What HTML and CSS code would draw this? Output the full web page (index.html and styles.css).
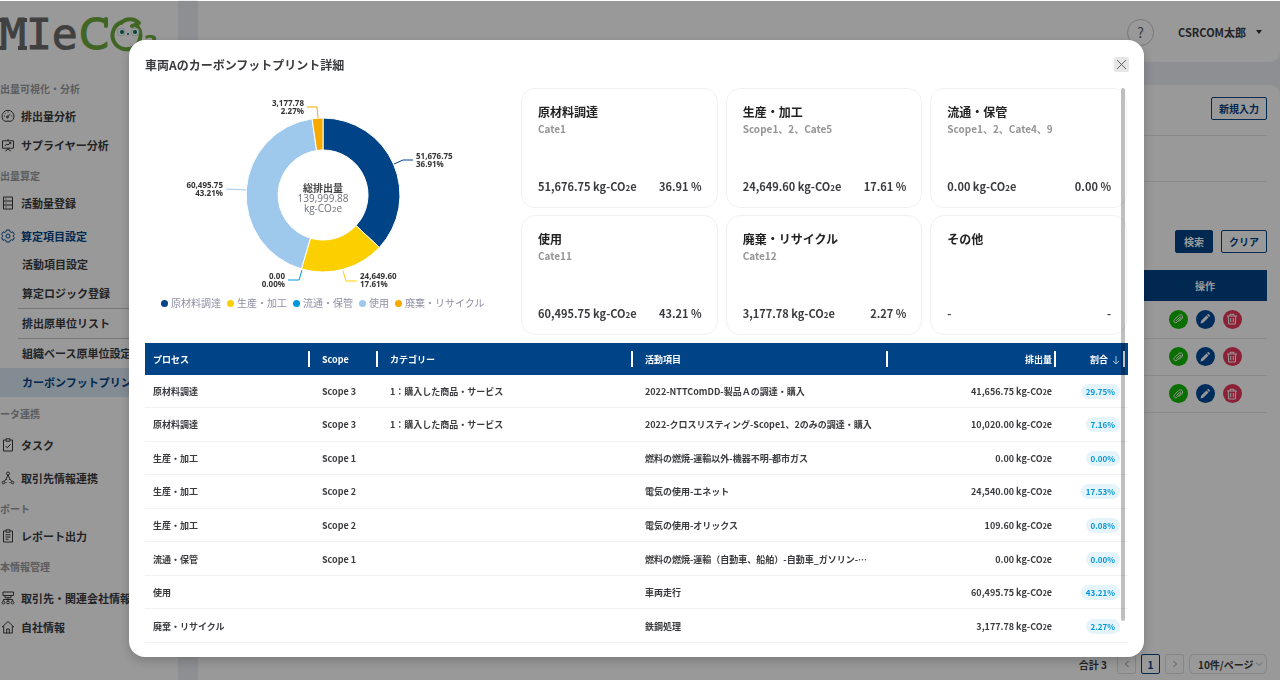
FILE: index.html
```html
<!doctype html>
<html lang="ja">
<head>
    <meta charset="UTF-8">
    <meta name="viewport" content="width=device-width, initial-scale=1">
    <title>MIeCO2</title>
    <link rel="stylesheet" href="styles.css">
</head>
<body>
<svg class="defs" width="0" height="0">
    <symbol id="i-gauge" viewBox="0 0 14 14"><path d="M3.5 12.2A6 6 0 1 1 10.5 12.2ZM6.2 8.2L9.4 5M7 2.6v1M3 7h1M10.2 7h1M4 4.2l.6.6"/><circle cx="6.4" cy="8" r="1"/></symbol>
    <symbol id="i-board" viewBox="0 0 14 14"><path d="M1.5 2.8h11v7.4h-11zM7 1v1.8M7 10.2v1.4M4.2 13L7 11.2 9.800 13M3.800 8l2-2 1.200 1 2.600-2.400M8 4.600h1.800v1.600"/></symbol>
    <symbol id="i-cabinet" viewBox="0 0 14 14"><path d="M2.500 1h9v12h-9zM2.500 5h9M2.500 9h9M4.500 3h1M4.500 7h1M4.500 11h1"/></symbol>
    <symbol id="i-gear" viewBox="0 0 14 14"><path d="M5.500 1h3l.5 1.700 1.200.7 1.700-.5 1.500 2.600-1.200 1.200v.8l1.200 1.200-1.500 2.600-1.700-.5-1.200.7-.5 1.500h-3L5 11.500l-1.200-.7-1.700.5L.6 8.700l1.200-1.200v-.8L.6 5.500l1.500-2.600 1.700.5L5 2.700z"/><circle cx="7" cy="7" r="2"/></symbol>
    <symbol id="i-task" viewBox="0 0 14 14"><path d="M5 2H2.500v11h9V2H9M5 .8h4v2.400H5zM4.500 8l1.800 1.800 3.200-3.600"/></symbol>
    <symbol id="i-link" viewBox="0 0 14 14"><circle cx="7" cy="2.500" r="1.500"/><circle cx="2.500" cy="11.500" r="1.300"/><circle cx="11.500" cy="11.500" r="1.300"/><path d="M7 4L4.800 8.500M7 4l2.200 4.500M3.200 10.300L4.800 8.500h1M10.800 10.300L9.200 8.500h-1M4.500 11.500h1M8.500 11.500h1"/></symbol>
    <symbol id="i-report" viewBox="0 0 14 14"><path d="M5 2H2.500v11h9V2H9M5 .8h4v2.400H5zM4.500 5.800h5M4.500 8h5M4.500 10.200h3"/></symbol>
    <symbol id="i-org" viewBox="0 0 14 14"><path d="M2 1h10.500v3.500H2zM4 4.500v2.200h6V4.500M7 6.700V10M2.500 10V8.500h9V10"/><circle cx="2.500" cy="11.500" r="1.400"/><circle cx="7" cy="11.500" r="1.400"/><circle cx="11.500" cy="11.500" r="1.400"/></symbol>
    <symbol id="i-home" viewBox="0 0 14 14"><path d="M1 7.200L7 1.500l6 5.700M2.700 6v7h8.600V6M5.700 13V9h2.600v4"/></symbol>
    <symbol id="i-clip" viewBox="0 0 12 12"><path d="M4.200 7.800l3.400-3.400c.9-.9 2 .2 1.100 1.100L5 9.200C3.300 10.900.8 8.400 2.500 6.700L6.500 2.700C9 .2 12.200 3.400 9.700 5.900L7 8.600"/></symbol>
    <symbol id="i-pen" viewBox="0 0 12 12"><path class="solid" d="M1.500 10.500l.7-2.700 5.300-5.300 2 2-5.300 5.300zM8.100 1.900l.8-.8c.5-.5 2.500 1.500 2 2l-.8.8z"/></symbol>
    <symbol id="i-trash" viewBox="0 0 12 12"><path d="M1 3h10M4 3V1.300h4V3M2.200 3l.5 8h6.600l.5-8M4.700 5v4.200M7.300 5v4.200"/></symbol>
</svg>

<div class="app">
    <aside class="sidebar">
        <a href="#" class="logo" aria-label="MIeCO2">
            <svg width="172" height="50" viewBox="0 0 172 50">
                <text class="logo-gray" x="3" y="40">MIe</text>
                <path class="logo-foot" d="M0 39h9M21 39h9M0 11h7M23 11h7"/>
                <text class="logo-green" x="82" y="40">C</text>
                <path class="logo-line" d="M109 10v7"/>
                <path class="logo-line" d="M125 13a14 14 0 1 0 14 3M124 14c5-5 13-5 18 0l-7 3"/>
                <circle class="eye-white" cx="124" cy="23" r="4"/>
                <circle class="eye-white" cx="138" cy="23" r="4"/>
                <circle class="eye" cx="125" cy="23" r="2"/>
                <circle class="eye" cx="138" cy="23" r="2"/>
                <circle class="eye" cx="131" cy="25" r="1"/>
                <text class="logo-sub" x="147" y="40">2</text>
            </svg>
        </a>
        <nav>
            <h2 class="section">排出量可視化・分析</h2>
            <a href="#" class="item"><svg class="icon"><use href="#i-gauge"/></svg>排出量分析</a>
            <a href="#" class="item"><svg class="icon"><use href="#i-board"/></svg>サプライヤー分析</a>
            <h2 class="section">排出量算定</h2>
            <a href="#" class="item"><svg class="icon"><use href="#i-cabinet"/></svg>活動量登録</a>
            <a href="#" class="item spaced active"><svg class="icon"><use href="#i-gear"/></svg>算定項目設定</a>
            <a href="#" class="sub">活動項目設定</a>
            <a href="#" class="sub">算定ロジック登録</a>
            <a href="#" class="sub line">排出原単位リスト</a>
            <a href="#" class="sub line">組織ベース原単位設定</a>
            <a href="#" class="sub cur">カーボンフットプリント</a>
            <h2 class="section">データ連携</h2>
            <a href="#" class="item spaced"><svg class="icon"><use href="#i-task"/></svg>タスク</a>
            <a href="#" class="item spaced"><svg class="icon"><use href="#i-link"/></svg>取引先情報連携</a>
            <h2 class="section">レポート</h2>
            <a href="#" class="item"><svg class="icon"><use href="#i-report"/></svg>レポート出力</a>
            <h2 class="section">基本情報管理</h2>
            <a href="#" class="item spaced"><svg class="icon"><use href="#i-org"/></svg>取引先・関連会社情報</a>
            <a href="#" class="item"><svg class="icon"><use href="#i-home"/></svg>自社情報</a>
        </nav>
    </aside>

    <div class="main">
        <header class="header">
            <button class="help">?</button>
            <button class="user">CSRCOM太郎<span class="caret"></span></button>
        </header>
        <main class="panel">
            <div class="bar bar-new"><button class="btn">新規入力</button></div>
            <div class="bar bar-filter"></div>
            <div class="bar-search">
                <button class="btn primary">検索</button>
                <button class="btn">クリア</button>
            </div>
            <table class="list">
                <thead>
                    <tr><th></th><th class="ops">操作</th></tr>
                </thead>
                <tbody>
                    <tr>
                        <td></td>
                        <td><div class="actions">
                            <button class="act green" aria-label="添付"><svg><use href="#i-clip"/></svg></button>
                            <button class="act blue" aria-label="編集"><svg><use href="#i-pen"/></svg></button>
                            <button class="act red" aria-label="削除"><svg><use href="#i-trash"/></svg></button>
                        </div></td>
                    </tr>
                    <tr>
                        <td></td>
                        <td><div class="actions">
                            <button class="act green" aria-label="添付"><svg><use href="#i-clip"/></svg></button>
                            <button class="act blue" aria-label="編集"><svg><use href="#i-pen"/></svg></button>
                            <button class="act red" aria-label="削除"><svg><use href="#i-trash"/></svg></button>
                        </div></td>
                    </tr>
                    <tr>
                        <td></td>
                        <td><div class="actions">
                            <button class="act green" aria-label="添付"><svg><use href="#i-clip"/></svg></button>
                            <button class="act blue" aria-label="編集"><svg><use href="#i-pen"/></svg></button>
                            <button class="act red" aria-label="削除"><svg><use href="#i-trash"/></svg></button>
                        </div></td>
                    </tr>
                </tbody>
            </table>
            <div class="pager">
                <span class="total">合計 3</span>
                <button class="page" aria-label="前へ"><svg width="8" height="8" viewBox="0 0 8 8"><path d="M5.500 1L2.500 4l3 3"/></svg></button>
                <button class="page on">1</button>
                <button class="page" aria-label="次へ"><svg width="8" height="8" viewBox="0 0 8 8"><path d="M2.500 1l3 3-3 3"/></svg></button>
                <div class="size">
                    <select aria-label="表示件数"><option>10件/ページ</option></select>
                    <svg width="8" height="8" viewBox="0 0 8 8"><path d="M1 2.500l3 3 3-3"/></svg>
                </div>
            </div>
        </main>
    </div>
</div>

<!-- モーダル -->
<div class="mask">
    <div class="modal" role="dialog" aria-modal="true" aria-labelledby="modal-title">
        <div class="modal-head">
            <h1 id="modal-title">車両Aのカーボンフットプリント詳細</h1>
            <button class="close" aria-label="閉じる"><svg width="11" height="11" viewBox="0 0 11 11"><path d="M1 1l9 9M10 1l-9 9"/></svg></button>
        </div>
        <div class="modal-body">
            <div class="summary">
                <div class="chart">
                    <svg width="356" height="206" viewBox="-178 -107 356 206">
                        <g class="pie">
                            <path class="c1" d="M0 -77A77 77 0 0 1 56.400 52.400L33 30.600A45 45 0 0 0 0 -45Z"/>
                            <path class="c2" d="M56.400 52.400A77 77 0 0 1 -21.600 73.900L-12.600 43.200A45 45 0 0 0 33 30.600Z"/>
                            <path class="c4" d="M-21.600 73.900A77 77 0 0 1 -10.900 -76.200L-6.400 -44.500A45 45 0 0 0 -12.600 43.200Z"/>
                            <path class="c5" d="M-10.900 -76.200A77 77 0 0 1 0 -77L0 -45A45 45 0 0 0 -6.400 -44.500Z"/>
                        </g>
                        <g class="lead">
                            <path class="l1" d="M71 -31l9-4h10"/>
                            <path class="l2" d="M20 76l3 10h11"/>
                            <path class="l3" d="M-21 75l-3 10h-11"/>
                            <path class="l4" d="M-77 -5l-20-1"/>
                            <path class="l5" d="M-5 -77l-1-11h-10"/>
                        </g>
                        <g class="num">
                            <text x="93" y="-36">51,676.75</text><text x="93" y="-28">36.91%</text>
                            <text x="37" y="84">24,649.60</text><text x="37" y="92">17.61%</text>
                        </g>
                        <g class="num end">
                            <text x="-19" y="-89">3,177.78</text><text x="-19" y="-81">2.27%</text>
                            <text x="-100" y="-7">60,495.75</text><text x="-100" y="1">43.21%</text>
                            <text x="-38" y="84">0.00</text><text x="-38" y="92">0.00%</text>
                        </g>
                        <g class="center">
                            <text class="strong" x="0" y="-3">総排出量</text>
                            <text x="0" y="7">139,999.88</text>
                            <text x="0" y="17">kg-CO<tspan class="s2">2</tspan>e</text>
                        </g>
                    </svg>
                    <ul class="legend">
                        <li><i class="b1"></i>原材料調達</li>
                        <li><i class="b2"></i>生産・加工</li>
                        <li><i class="b3"></i>流通・保管</li>
                        <li><i class="b4"></i>使用</li>
                        <li><i class="b5"></i>廃棄・リサイクル</li>
                    </ul>
                </div>
                <div class="cards">
                    <div class="card"><h3>原材料調達</h3><p>Cate1</p><div class="val"><span>51,676.75 kg-CO<small>2</small>e</span><span>36.91 %</span></div></div>
                    <div class="card"><h3>生産・加工</h3><p>Scope1、2、Cate5</p><div class="val"><span>24,649.60 kg-CO<small>2</small>e</span><span>17.61 %</span></div></div>
                    <div class="card"><h3>流通・保管</h3><p>Scope1、2、Cate4、9</p><div class="val"><span>0.00 kg-CO<small>2</small>e</span><span>0.00 %</span></div></div>
                    <div class="card"><h3>使用</h3><p>Cate11</p><div class="val"><span>60,495.75 kg-CO<small>2</small>e</span><span>43.21 %</span></div></div>
                    <div class="card"><h3>廃棄・リサイクル</h3><p>Cate12</p><div class="val"><span>3,177.78 kg-CO<small>2</small>e</span><span>2.27 %</span></div></div>
                    <div class="card"><h3>その他</h3><div class="val"><span>-</span><span>-</span></div></div>
                </div>
            </div>
            <table class="detail">
                <colgroup><col class="w1"><col class="w2"><col class="w3"><col class="w4"><col class="w5"><col class="w6"></colgroup>
                <thead>
                    <tr><th>プロセス</th><th>Scope</th><th>カテゴリー</th><th>活動項目</th><th>排出量</th><th>割合<svg class="sort" width="8" height="10" viewBox="0 0 8 10"><path d="M4 1v8M1 6l3 3 3-3"/></svg></th></tr>
                </thead>
                <tbody>
                    <tr><td>原材料調達</td><td>Scope 3</td><td>1：購入した商品・サービス</td><td>2022-NTTComDD-製品Ａの調達・購入</td><td>41,656.75 kg-CO<small>2</small>e</td><td><span class="tag">29.75%</span></td></tr>
                    <tr><td>原材料調達</td><td>Scope 3</td><td>1：購入した商品・サービス</td><td>2022-クロスリスティング-Scope1、2のみの調達・購入</td><td>10,020.00 kg-CO<small>2</small>e</td><td><span class="tag">7.16%</span></td></tr>
                    <tr><td>生産・加工</td><td>Scope 1</td><td></td><td>燃料の燃焼-運輸以外-機器不明-都市ガス</td><td>0.00 kg-CO<small>2</small>e</td><td><span class="tag">0.00%</span></td></tr>
                    <tr><td>生産・加工</td><td>Scope 2</td><td></td><td>電気の使用-エネット</td><td>24,540.00 kg-CO<small>2</small>e</td><td><span class="tag">17.53%</span></td></tr>
                    <tr><td>生産・加工</td><td>Scope 2</td><td></td><td>電気の使用-オリックス</td><td>109.60 kg-CO<small>2</small>e</td><td><span class="tag">0.08%</span></td></tr>
                    <tr><td>流通・保管</td><td>Scope 1</td><td></td><td>燃料の燃焼-運輸（自動車、船舶）-自動車_ガソリン-…</td><td>0.00 kg-CO<small>2</small>e</td><td><span class="tag">0.00%</span></td></tr>
                    <tr><td>使用</td><td></td><td></td><td>車両走行</td><td>60,495.75 kg-CO<small>2</small>e</td><td><span class="tag">43.21%</span></td></tr>
                    <tr><td>廃棄・リサイクル</td><td></td><td></td><td>鉄鋼処理</td><td>3,177.78 kg-CO<small>2</small>e</td><td><span class="tag">2.27%</span></td></tr>
                </tbody>
            </table>
            <div class="scroll"></div>
        </div>
    </div>
</div>
</body>
</html>
```
FILE: styles.css
```css
* {
    margin: 0;
    padding: 0;
    box-sizing: border-box;
    list-style: none;
}
body{
    font-family: "Noto Sans CJK JP", sans-serif;
    font-size: 11px;
    font-weight: 700;
    color: #3a3b3e;
    background: #eceef6;
}
a{
    color: inherit;
    text-decoration: none;
}
button, select{
    font: inherit;
    color: inherit;
    background: none;
    border: 0;
    cursor: pointer;
}
svg{
    display: block;
    fill: none;
    stroke: currentColor;
}
text{
    stroke: none;
}
.defs{
    position: absolute;
}
.app{
    display: flex;
    min-height: 100vh;
}

/* サイドバー */
.sidebar{
    flex: none;
    width: 198px;
    margin-left: -20px;
    background: #fff;
}
.logo{
    display: block;
    height: 72px;
    padding: 9px 0 0 17px;
}
.logo-gray, .logo-green{
    font-family: "DejaVu Sans Mono", monospace;
    font-size: 43px;
    font-weight: 400;
    fill: #6c6c6c;
    stroke: #6c6c6c;
    stroke-width: 1px;
}
.logo-foot{
    stroke: #6c6c6c;
    stroke-width: 4px;
}
.logo-green{
    font-family: "DejaVu Sans", sans-serif;
    fill: #6dab3c;
    stroke: #6dab3c;
}
.logo-sub{
    font-family: "DejaVu Sans", sans-serif;
    font-size: 20px;
    fill: #6dab3c;
}
.logo-line{
    stroke: #6dab3c;
    stroke-width: 4px;
    stroke-linecap: round;
    stroke-linejoin: round;
}
.eye-white{
    fill: #fff;
    stroke: #cfe3df;
}
.eye{
    fill: #00705c;
    stroke: none;
}
.section{
    height: 29px;
    padding: 4px 0 0 10px;
    font-size: 10px;
    line-height: 25px;
    font-weight: 700;
    color: #989a9e;
}
.item{
    display: flex;
    align-items: center;
    height: 29px;
    padding-left: 21px;
    gap: 6px;
    white-space: nowrap;
}
.spaced{
    margin-top: 4px;
}
.active{
    color: #004386;
}
.icon{
    width: 14px;
    height: 14px;
    stroke-width: 1px;
}
.sub{
    display: block;
    height: 29px;
    margin-left: 38px;
    padding-left: 4px;
    line-height: 29px;
    white-space: nowrap;
}
.line{
    height: 30px;
    border-top: 1px solid #c4c6ca;
}
.cur{
    margin-left: 0;
    padding-left: 42px;
    color: #004386;
    background: #dce9f5;
}

/* メイン */
.main{
    flex: 1;
    display: flex;
    flex-direction: column;
    gap: 23px;
    margin-left: 20px;
}
.header{
    display: flex;
    align-items: center;
    justify-content: flex-end;
    gap: 24px;
    height: 62px;
    padding: 2px 18px 0 0;
    background: #fff;
    border-radius: 0 0 10px 10px;
}
.help{
    width: 27px;
    height: 27px;
    border: 1px solid #c4c6ca;
    border-radius: 50%;
    font-size: 14px;
    font-weight: 400;
    line-height: 20px;
    color: #606266;
}
.user{
    display: flex;
    align-items: center;
    gap: 10px;
}
.caret{
    border: 3px solid transparent;
    border-top: 4px solid #303133;
    border-bottom: 0;
}
.panel{
    flex: 1;
    display: flex;
    flex-direction: column;
    padding: 0 13px 6px;
    background: #fff;
    border-radius: 10px 10px 0 0;
}
.bar{
    display: flex;
    justify-content: flex-end;
    align-items: flex-start;
    border-bottom: 1px solid #e3e5ea;
}
.bar-new{
    height: 51px;
    padding-top: 12px;
}
.bar-filter{
    height: 46px;
}
.bar-search{
    display: flex;
    justify-content: flex-end;
    gap: 8px;
    padding: 48px 0 17px;
}
.btn{
    height: 23px;
    padding: 0 7px;
    border: 1px solid #004386;
    border-radius: 2px;
    font-size: 10px;
    line-height: 20px;
    color: #004386;
}
.primary{
    padding: 0 8px;
    color: #fff;
    background: #004386;
}
.list{
    width: 100%;
    border-collapse: collapse;
}
.list th{
    height: 31px;
    font-size: 10px;
    color: #fff;
    background: #004386;
}
.list .ops{
    width: 124px;
}
.list td{
    height: 37px;
    border-bottom: 1px solid #e3e5ea;
}
.actions{
    display: flex;
    justify-content: center;
    gap: 8px;
}
.act{
    display: flex;
    align-items: center;
    justify-content: center;
    width: 19px;
    height: 19px;
    border-radius: 50%;
    color: #fff;
}
.act svg{
    width: 12px;
    height: 12px;
}
.solid{
    fill: currentColor;
    stroke: none;
}
.green{
    background: #12b800;
}
.blue{
    background: #004a98;
}
.red{
    background: #e8385c;
}
.pager{
    display: flex;
    align-items: center;
    justify-content: flex-end;
    gap: 5px;
    margin-top: auto;
    font-size: 10px;
}
.total{
    margin-right: 5px;
}
.page{
    display: flex;
    align-items: center;
    justify-content: center;
    width: 19px;
    height: 20px;
    border: 1px solid #dcdfe6;
    border-radius: 2px;
    color: #909399;
}
.on{
    border-color: #004386;
    color: #004386;
}
.size{
    display: flex;
    align-items: center;
    width: 78px;
    height: 20px;
    padding: 0 3px 0 8px;
    border: 1px solid #dcdfe6;
    border-radius: 5px;
}
.size select{
    flex: 1;
    min-width: 0;
    appearance: none;
}
.size svg{
    color: #a8abb2;
}

/* モーダル */
.mask{
    position: fixed;
    top: 1px;
    left: 0;
    right: 0;
    bottom: 0;
    display: flex;
    padding: 39px 136px 23px 129px;
    background: rgba(0,0,0,.4);
}
.modal{
    flex: 1;
    min-width: 0;
    overflow: hidden;
    background: #fff;
    border-radius: 16px;
    box-shadow: 0 4px 12px rgba(0,0,0,.2);
}
.modal-head{
    display: flex;
    align-items: center;
    justify-content: space-between;
    height: 48px;
    padding: 0 15px 0 16px;
}
.modal-head h1{
    font-size: 12px;
}
.close{
    display: flex;
    align-items: center;
    justify-content: center;
    width: 15px;
    height: 15px;
    border-radius: 2px;
    background: #e6e6e6;
    color: #606266;
}
.modal-body{
    position: relative;
    margin: 0 17px 0 16px;
}
.summary{
    display: flex;
    margin-bottom: 8px;
}
.chart{
    flex: none;
    width: 376px;
}
.c1{ fill: #004386; }
.c2{ fill: #fcd000; }
.c4{ fill: #9fc9ec; }
.c5{ fill: #f8a900; }
.pie path{
    stroke: #fff;
    stroke-width: 1px;
}
.l1{ stroke: #004386; }
.l2{ stroke: #fcd000; }
.l3{ stroke: #0098da; }
.l4{ stroke: #9fc9ec; }
.l5{ stroke: #f8a900; }
.num{
    font-family: "Noto Sans", sans-serif;
    font-size: 8px;
    font-weight: 700;
    fill: #333;
}
.end{
    text-anchor: end;
}
.center{
    font-family: "Open Sans", "Noto Sans CJK JP", sans-serif;
    font-size: 10px;
    font-weight: 400;
    fill: #6e7079;
    text-anchor: middle;
}
.center .strong{
    font-weight: 700;
    fill: #464646;
}
.s2{
    font-size: 8px;
}
.legend{
    display: flex;
    gap: 6px;
    padding-left: 16px;
    font-size: 10px;
    line-height: 18px;
    font-weight: 400;
    color: #8f8fa5;
}
.legend li{
    display: flex;
    align-items: center;
    gap: 3px;
    white-space: nowrap;
}
.legend i{
    width: 7px;
    height: 7px;
    border-radius: 50%;
}
.b1{ background: #004386; }
.b2{ background: #fcd000; }
.b3{ background: #0098da; }
.b4{ background: #9fc9ec; }
.b5{ background: #f8a900; }
.cards{
    flex: 1;
    display: grid;
    grid-template-columns: repeat(3, 1fr);
    gap: 7px 8px;
}
.card{
    display: flex;
    flex-direction: column;
    height: 120px;
    padding: 14px 15px 13px 16px;
    border: 1px solid #f0f1f5;
    border-radius: 14px;
}
.card h3{
    font-size: 12px;
    line-height: 18px;
    color: #222;
}
.card p{
    font-size: 10px;
    line-height: 16px;
    color: #959595;
}
.val{
    display: flex;
    justify-content: space-between;
    margin-top: auto;
    font-size: 11px;
    line-height: 16px;
}
small{
    font-size: 8px;
    line-height: 1;
}
.detail{
    width: 100%;
    height: 300px;
    table-layout: fixed;
    border-collapse: collapse;
    font-size: 9px;
    line-height: 15px;
}
.detail small{
    font-size: 7px;
}
.w1{ width: 165px; }
.w2{ width: 68px; }
.w3{ width: 255px; }
.w4{ width: 255px; }
.w5{ width: 168px; }
.w6{ width: 72px; }
.detail th{
    height: 32px;
    padding-left: 12px;
    text-align: left;
    color: #fff;
    background: #004386 linear-gradient(#fff, #fff) right center / 2px 16px no-repeat;
}
.detail td{
    padding: 1px 0 0 12px;
    border-bottom: 1px solid #f0f1f5;
    white-space: nowrap;
}
.detail th:first-child, .detail td:first-child{
    padding-left: 8px;
}
.detail th:nth-child(5), .detail td:nth-child(5){
    padding-right: 4px;
    text-align: right;
}
.detail th:last-child, .detail td:last-child{
    padding-right: 8px;
    text-align: right;
}
.detail th:last-child{
    background-position: right 3px center;
}
.sort{
    display: inline-block;
    margin-left: 4px;
    vertical-align: middle;
    color: #a8c0d8;
}
.tag{
    display: inline-block;
    padding: 0 5px;
    border-radius: 8px;
    font-size: 8px;
    color: #0098da;
    background: #e5f4fb;
}
.scroll{
    position: absolute;
    top: 0;
    right: 2px;
    width: 4px;
    height: 533px;
    border-radius: 2px;
    background: rgba(0,0,0,.25);
}
```
